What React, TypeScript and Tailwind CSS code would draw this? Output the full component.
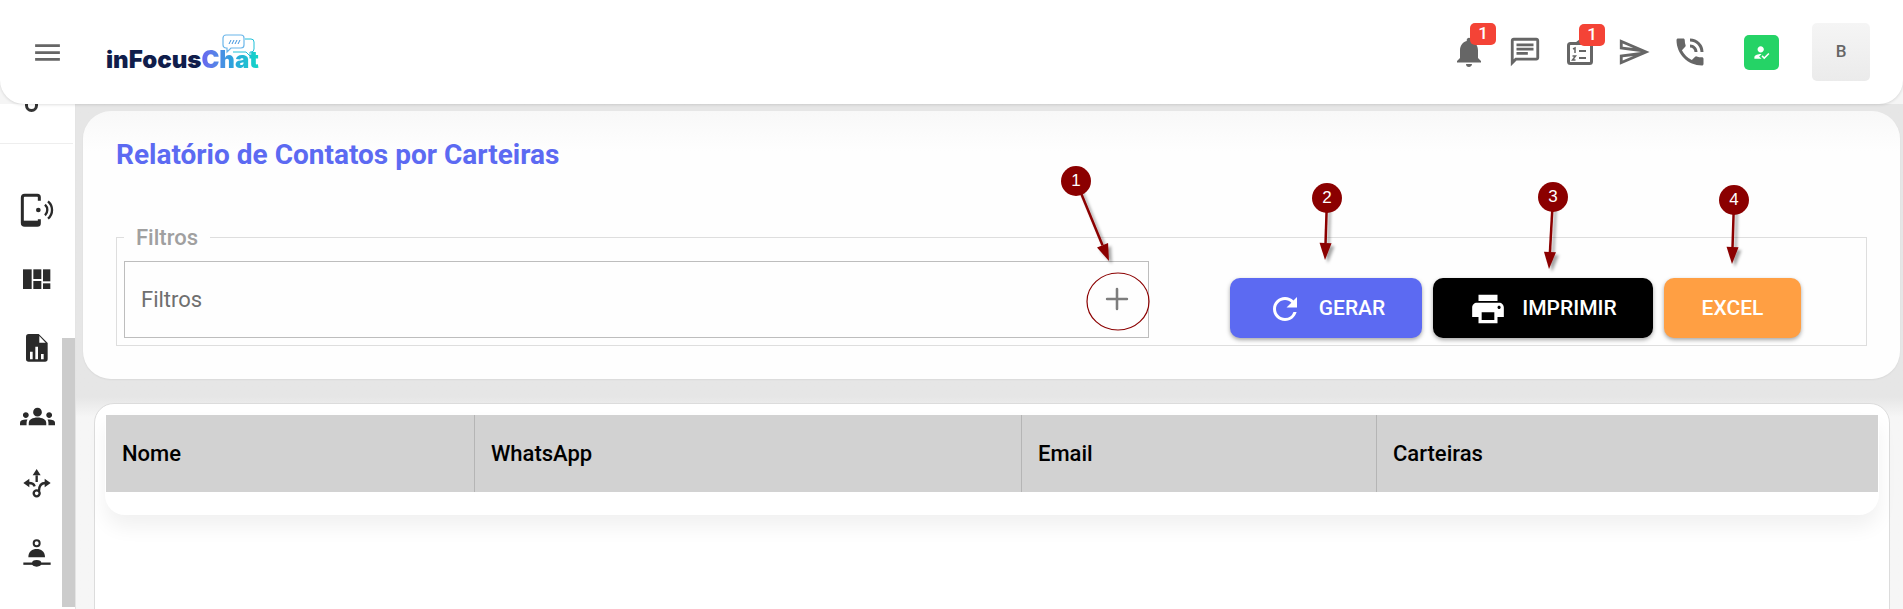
import { Plus } from "lucide-react";
import {
  MdGroups,
  MdMenu,
  MdNotifications,
  MdOutlineChat,
  MdOutlineSend,
  MdPhoneInTalk,
  MdPrint,
  MdHowToReg,
  MdRefresh,
} from "react-icons/md";

const COLUMNS = [
  { label: "Nome", width: "w-[369px]" },
  { label: "WhatsApp", width: "w-[547px]" },
  { label: "Email", width: "w-[355px]" },
  { label: "Carteiras", width: "flex-1" },
];

function Badge({ className }: { className: string }) {
  return (
    <span className={`absolute flex h-[22px] w-[26px] items-center justify-center rounded-[5px] bg-[#f44336] text-[17px] font-medium text-white ${className}`}>
      1
    </span>
  );
}

function Callout({ n, x1, y1, x2, y2 }: { n: number; x1: number; y1: number; x2: number; y2: number }) {
  // numbered marker with an arrow, sits over the page like a screenshot annotation
  const ang = Math.atan2(y2 - y1, x2 - x1);
  const head = 17;
  const bx = x2 - head * Math.cos(ang);
  const by = y2 - head * Math.sin(ang);
  const px = 6 * Math.sin(ang);
  const py = 6 * Math.cos(ang);
  return (
    <>
      <svg className="pointer-events-none absolute left-0 top-0" width={1903} height={609}>
        <defs>
          <filter id={`sh${n}`} x="-50%" y="-50%" width="200%" height="200%">
            <feDropShadow dx="3" dy="3" stdDeviation="1.5" floodColor="#000" floodOpacity="0.35" />
          </filter>
        </defs>
        <g filter={`url(#sh${n})`}>
          <line x1={x1} y1={y1} x2={bx} y2={by} stroke="#8b0000" strokeWidth={2.5} />
          <polygon points={`${x2},${y2} ${bx + px},${by - py} ${bx - px},${by + py}`} fill="#8b0000" />
        </g>
      </svg>
      <span
        className="absolute flex size-[30px] items-center justify-center rounded-full bg-[#8b0000] font-['Liberation_Sans',sans-serif] text-[17px] text-white"
        style={{ left: x1 - 15, top: y1 - 15 }}
      >
        {n}
      </span>
    </>
  );
}

function Logo() {
  return (
    <div className="relative ml-[42px] mt-[16px]">
      <span className="block font-['Inter',sans-serif] text-[24px] font-black leading-[30px] text-[#101d4b]">
        inFocus
        <span className="bg-gradient-to-r from-[#6a63f0] via-[#2f9ede] to-[#10d6c6] bg-clip-text text-transparent">
          Chat
        </span>
      </span>
      <svg className="absolute left-[116px] top-[-11px]" width="33" height="23" viewBox="0 0 33 23" fill="none">
        <path d="M23 5h6a3 3 0 0 1 3 3v7a3 3 0 0 1-3 3h-1v4l-4-4H11" stroke="#1fc0d8" strokeWidth="1" />
        <path d="M4 1h15a3 3 0 0 1 3 3v7a3 3 0 0 1-3 3H9l-4 4v-4H4a3 3 0 0 1-3-3V4a3 3 0 0 1 3-3z" fill="#fff" stroke="#6bb6ea" strokeWidth="1.2" />
        <path d="M7 10l2-4M10 10l2-4M13 10l2-4M16 10l2-4" stroke="#3f93dd" strokeWidth="1" />
      </svg>
    </div>
  );
}

function ClipboardList() {
  return (
    <svg width="26" height="25" viewBox="0 0 26 25" fill="none" stroke="#666">
      <rect x="1.5" y="3.5" width="23" height="20" rx="2" strokeWidth="3" />
      <path d="M9 4l4-3 4 3" strokeWidth="3" />
      <path d="M6 9l2-1v5" strokeWidth="1.5" />
      <path d="M5.5 16h3l-3 4h3" strokeWidth="1.5" />
      <path d="M12 11h7M12 18h7" strokeWidth="2.2" />
    </svg>
  );
}

function IconPhoneSignal() {
  return (
    <svg width="40" height="40" viewBox="51 58 120 120" fill="none" stroke="#2a2a2a">
      <path d="M118 90V80a6 6 0 0 0-6-6H74a7 7 0 0 0-7 7v76a7 7 0 0 0 7 7h38a6 6 0 0 0 6-6v-12" strokeWidth="9" />
      <rect x="69" y="150" width="49" height="12" fill="#2a2a2a" stroke="none" />
      <circle cx="115" cy="118" r="7" fill="#2a2a2a" stroke="none" />
      <path d="M135 102a22 22 0 0 1 0 32M144 92a34 34 0 0 1 0 52" strokeWidth="7" />
    </svg>
  );
}

function IconQuilt() {
  return (
    <svg width="40" height="40" viewBox="51 262 120 120" fill="#2a2a2a">
      <rect x="69" y="293" width="26" height="59" />
      <rect x="100" y="293" width="24" height="29" />
      <rect x="100" y="328" width="24" height="24" />
      <rect x="129" y="293" width="22" height="36" />
      <rect x="129" y="335" width="22" height="17" />
    </svg>
  );
}

function IconFileChart() {
  return (
    <svg width="40" height="40" viewBox="51 470 120 120">
      <path d="M86 488h30l27 27v48a8 8 0 0 1-8 8H86a8 8 0 0 1-8-8v-67a8 8 0 0 1 8-8z" fill="#2a2a2a" />
      <path d="M118 494l19 20h-19z" fill="#fff" />
      <path d="M90 541h8v23h-8zM106 526h8v38h-8zM123 548h8v16h-8z" fill="#fff" />
    </svg>
  );
}

function IconRouteArrows() {
  return (
    <svg width="40" height="40" viewBox="51 884 120 120" fill="none" stroke="#2a2a2a" strokeWidth="7">
      <circle cx="110" cy="966" r="9" />
      <path d="M110 912v20" />
      <path d="M86 935c10 0 16 3 18 10" />
      <path d="M136 935c-12 0-19 8-19 24" />
      <path d="M110 893l12 19H98zM70 935l18-13v26zM152 935l-18-13v26z" fill="#2a2a2a" stroke="none" />
    </svg>
  );
}

function IconNode() {
  return (
    <svg width="40" height="40" viewBox="51 1093 120 120" fill="none" stroke="#2a2a2a">
      <circle cx="110" cy="1118" r="9" strokeWidth="6" />
      <path d="M85 1160c0-18 12-25 25-25s25 7 25 25z" fill="#2a2a2a" stroke="none" />
      <path d="M70 1179h82" strokeWidth="7" />
      <ellipse cx="110" cy="1178" rx="14" ry="10" fill="#2a2a2a" stroke="none" />
    </svg>
  );
}

const SIDE_ICONS = [IconPhoneSignal, IconQuilt, IconFileChart, () => <MdGroups className="size-[35px]" />, IconRouteArrows, IconNode];

export default function App() {
  return (
    <div className="relative h-[609px] w-[1903px] overflow-hidden bg-[#f5f5f5] font-['Roboto',sans-serif]">
      {/* Top bar */}
      <header className="relative z-20 flex h-[104px] items-center rounded-b-[24px] bg-white pl-[31px] pr-[33px] shadow-[0_1px_3px_rgba(0,0,0,0.12)]">
        <MdMenu className="size-[33px] text-[#666]" />
        <Logo />
        <div className="ml-auto flex items-center text-[#666]">
          <div className="relative mr-[21px]">
            <MdNotifications className="size-[36px]" />
            <Badge className="left-[19px] top-[-11px]" />
          </div>
          <MdOutlineChat className="mr-[25px] size-[34px]" />
          <div className="relative mr-[24px]">
            <ClipboardList />
            <Badge className="left-[12px] top-[-16px]" />
          </div>
          <MdOutlineSend className="mr-[21px] size-[34px]" />
          <MdPhoneInTalk className="mr-[36px] size-[36px]" />
          <span className="mr-[33px] flex size-[35px] items-center justify-center rounded-[5px] bg-[#25d366] text-white">
            <MdHowToReg className="size-[19px]" />
          </span>
          <span className="flex size-[58px] items-center justify-center rounded-[5px] bg-gradient-to-b from-[#f5f5f5] to-[#ebebeb] text-[17px] font-medium text-[#666]">
            B
          </span>
        </div>
      </header>

      <div className="flex h-[505px]">
        {/* Sidebar */}
        <aside className="relative w-[76px] shrink-0 border-r border-[#e4e4e4] bg-white">
          <div className="ml-[25px] mt-[-3px] h-[11px] w-[13px] rounded-b-[7px] border-x-[3px] border-b-[3px] border-[#333]" />
          <div className="mt-[31px] h-[1px] w-[73px] bg-[#eee]" />
          <div className="ml-[17px] mt-[31px] flex flex-col text-[#2a2a2a]">
            {SIDE_ICONS.map((Icon, i) => (
              <div key={i} className="flex h-[69px] w-[40px] items-center justify-center">
                <Icon />
              </div>
            ))}
          </div>
          <div className="absolute bottom-[2px] right-0 h-[269px] w-[13px] bg-[#cccccc]" />
        </aside>

        <main className="flex-1 bg-gradient-to-b from-[#e6e6e6] from-58% to-[#f6f6f6] to-62% pl-[7px] pr-[3px] pt-[7px]">
          {/* Filter card */}
          <section className="h-[268px] rounded-[28px] bg-gradient-to-b from-[#f8f8f8] to-[#fefefe] to-15% px-[33px] pt-[27px] shadow-[0_1px_2px_rgba(0,0,0,0.06)]">
            <h1 className="text-[28px] font-bold leading-[34px] text-[#5c6af2]">
              Relatório de Contatos por Carteiras
            </h1>
            <fieldset className="mt-[65px] flex h-[109px] items-start border border-[#dedede] pl-[7px]">
              <legend className="px-[12px] text-[22px] font-medium leading-[0px] text-[#a0a0a0]">
                Filtros
              </legend>
              <div className="mt-[23px] flex h-[77px] w-[1025px] items-center justify-between border border-[#bdbdbd] pb-[1px] pl-[16px] pr-[14px]">
                <span className="text-[22px] text-[#6f6f6f]">Filtros</span>
                <Plus className="size-[34px] text-[#7d7d7d]" strokeWidth={1.8} />
              </div>
              <div className="ml-[81px] mt-[40px] flex gap-[11px] text-[21px] font-medium uppercase text-white">
                <button type="button" className="flex h-[60px] w-[192px] items-center justify-center gap-[16px] rounded-[10px] bg-[#5c6af2] pt-[1px] shadow-[0_2px_4px_rgba(0,0,0,0.35)]">
                  <MdRefresh className="size-[36px]" />
                  GERAR
                </button>
                <button type="button" className="flex h-[60px] w-[220px] items-center justify-center gap-[15px] rounded-[10px] bg-black pt-[1px] shadow-[0_2px_4px_rgba(0,0,0,0.35)]">
                  <MdPrint className="size-[38px]" />
                  IMPRIMIR
                </button>
                <button type="button" className="flex h-[60px] w-[137px] items-center justify-center rounded-[10px] bg-[#ff9f43] pt-[1px] shadow-[0_2px_4px_rgba(0,0,0,0.35)]">
                  EXCEL
                </button>
              </div>
            </fieldset>
          </section>

          {/* Table card */}
          <section className="ml-[11px] mr-[10px] mt-[24px] h-[300px] rounded-t-[20px] border border-[#dcdcdc] bg-white px-[10px] pt-[11px]">
            <div className="rounded-b-[20px] bg-white px-[1px] pb-[23px] shadow-[0_12px_20px_rgba(0,0,0,0.06)]">
              <div className="flex h-[77px] bg-[#d2d2d2] text-[22px] font-medium text-black">
                {COLUMNS.map((c, i) => (
                  <div
                    key={c.label}
                    className={`${c.width} flex items-center pl-[16px] ${i < COLUMNS.length - 1 ? "border-r border-[#b5b5b5]" : ""}`}
                  >
                    {c.label}
                  </div>
                ))}
              </div>
            </div>
          </section>
        </main>
      </div>

      {/* Annotations */}
      <div className="pointer-events-none absolute inset-0 z-30">
        <Callout n={1} x1={1076} y1={181} x2={1109} y2={261} />
        <Callout n={2} x1={1327} y1={198} x2={1325} y2={260} />
        <Callout n={3} x1={1553} y1={197} x2={1549} y2={269} />
        <Callout n={4} x1={1734} y1={200} x2={1732} y2={264} />
        <svg className="absolute left-[1086px] top-[272px]" width="64" height="60">
          <ellipse cx="32" cy="29.5" rx="31" ry="28.5" fill="none" stroke="#8b0000" strokeWidth="1.2" />
        </svg>
      </div>
    </div>
  );
}
